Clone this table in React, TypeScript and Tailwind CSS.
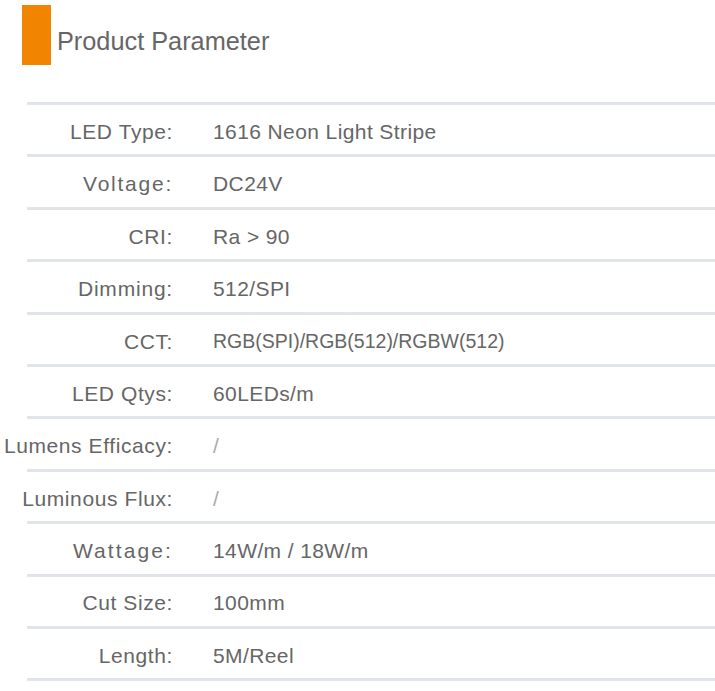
const rows: { label: string; value: string; labelCls?: string; valueCls?: string }[] = [
  { label: "LED Type:", value: "1616 Neon Light Stripe" },
  { label: "Voltage:", value: "DC24V", labelCls: "tracking-[1.75px]" },
  { label: "CRI:", value: "Ra > 90" },
  { label: "Dimming:", value: "512/SPI", labelCls: "tracking-[0.8px]" },
  { label: "CCT:", value: "RGB(SPI)/RGB(512)/RGBW(512)", valueCls: "text-[19.5px] tracking-normal" },
  { label: "LED Qtys:", value: "60LEDs/m" },
  { label: "Lumens Efficacy:", value: "/", valueCls: "text-[#aaaaaa]" },
  { label: "Luminous Flux:", value: "/", valueCls: "text-[#aaaaaa]" },
  { label: "Wattage:", value: "14W/m / 18W/m", labelCls: "tracking-[2.1px]" },
  { label: "Cut Size:", value: "100mm" },
  { label: "Length:", value: "5M/Reel" },
];

export default function App() {
  return (
    <div className="w-[715px] h-[691px] bg-white pt-[5px] font-['Liberation_Sans',Arial,sans-serif] text-[#666666] overflow-hidden">
      {/* Header */}
      <div className="flex h-[60px] ml-[22px]">
        <div className="w-[29px] h-[60px] bg-[#f18400]" />
        <h2 className="ml-[6px] mt-[24px] text-[25.3px] leading-[25px]">Product Parameter</h2>
      </div>

      {/* Parameter table */}
      <div className="ml-[27px] w-[688px] mt-[37px] border-t-[3px] border-[#e1e4e8]">
        {rows.map((r) => (
          <div
            key={r.label}
            className="flex items-center h-[52.4px] border-b-[3px] border-[#e1e4e8] pt-[4px] text-[21px] tracking-[0.4px]"
          >
            <div className="w-[146px] shrink-0 flex justify-end whitespace-nowrap tracking-[0.6px]">
              <span className={r.labelCls}>{r.label}</span>
            </div>
            <div className={"pl-[40px] whitespace-nowrap " + (r.valueCls ?? "")}>{r.value}</div>
          </div>
        ))}
      </div>
    </div>
  );
}
